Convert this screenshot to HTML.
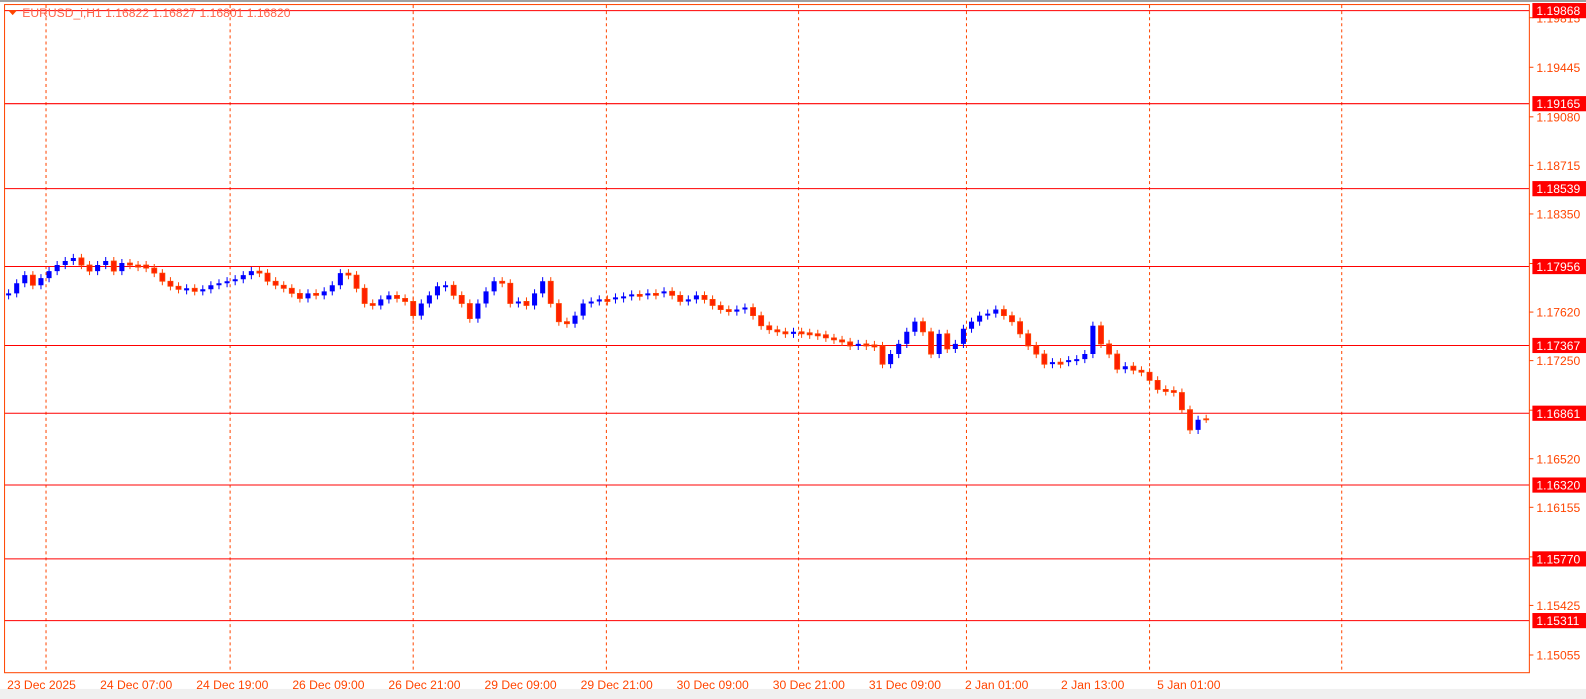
<!DOCTYPE html>
<html><head><meta charset="utf-8"><style>
body{margin:0;width:1586px;height:699px;background:#fff;overflow:hidden}
svg{display:block}
text{font-family:"Liberation Sans",sans-serif;font-size:12px}
</style></head><body>
<svg width="1586" height="699" viewBox="0 0 1568 691" preserveAspectRatio="none" xmlns="http://www.w3.org/2000/svg">
<rect x="0" y="0" width="1568" height="2" fill="#a0a0a0"/>
<rect x="0" y="681" width="1568" height="10" fill="#f0f0f0"/>
<g stroke="#ff4500" stroke-dasharray="3,3" stroke-width="1">
<line x1="45.5" y1="5" x2="45.5" y2="665"/><line x1="227.5" y1="5" x2="227.5" y2="665"/><line x1="408.5" y1="5" x2="408.5" y2="665"/><line x1="599.5" y1="5" x2="599.5" y2="665"/><line x1="789.5" y1="5" x2="789.5" y2="665"/><line x1="955.5" y1="5" x2="955.5" y2="665"/><line x1="1136.5" y1="5" x2="1136.5" y2="665"/><line x1="1326.5" y1="5" x2="1326.5" y2="665"/>
</g>
<g stroke="#ff0000" stroke-width="1">
<line x1="4" y1="10.5" x2="1512" y2="10.5"/><line x1="4" y1="102.5" x2="1512" y2="102.5"/><line x1="4" y1="186.5" x2="1512" y2="186.5"/><line x1="4" y1="263.5" x2="1512" y2="263.5"/><line x1="4" y1="341.5" x2="1512" y2="341.5"/><line x1="4" y1="408.5" x2="1512" y2="408.5"/><line x1="4" y1="479.5" x2="1512" y2="479.5"/><line x1="4" y1="552.5" x2="1512" y2="552.5"/><line x1="4" y1="613.5" x2="1512" y2="613.5"/>
</g>
<rect x="4.5" y="4.5" width="1507.5" height="660.5" fill="none" stroke="#ff4500"/>
<path fill="none" stroke="#0000ff" d="M8.5 286v10 M16.5 276v18 M24.5 268v16 M40.5 271v15 M48.5 264v15 M56.5 258v14 M64.5 254v12 M72.5 251v11 M96.5 258v14 M104.5 254v12 M120.5 256v16 M184.5 281v10 M200.5 282v10 M208.5 278v12 M216.5 276v10 M224.5 274v10 M232.5 272v10 M240.5 268v12 M248.5 264v12 M304.5 286v13 M320.5 284v12 M328.5 278v14 M336.5 266v20 M376.5 292v14 M384.5 288v12 M416.5 296v20 M424.5 288v16 M432.5 279v17 M440.5 278v10 M472.5 296v23 M480.5 284v20 M488.5 274v18 M512.5 294v10 M528.5 286v20 M536.5 274v20 M568.5 308v16 M576.5 296v20 M584.5 294v10 M592.5 292v10 M608.5 290v10 M616.5 289v10 M624.5 287v10 M640.5 286v10 M656.5 284v10 M680.5 292v10 M688.5 288v12 M728.5 302v10 M736.5 300v10 M784.5 324v10 M848.5 336v10 M880.5 346v18 M888.5 336v18 M896.5 324v20 M904.5 314v18 M928.5 326v28 M944.5 336v13 M952.5 321v23 M960.5 314v15 M968.5 308v14 M976.5 306v10 M984.5 302v12 M1040.5 354v10 M1056.5 352v10 M1064.5 351v10 M1072.5 346v13 M1080.5 318v36 M1112.5 358v11 M1184.5 411v18"/>
<path fill="#0000ff" d="M6 290h5v2h-5z M14 280h5v10h-5z M22 272h5v8h-5z M38 275h5v7h-5z M46 268h5v7h-5z M54 262h5v6h-5z M62 258h5v4h-5z M70 255h5v3h-5z M94 262h5v6h-5z M102 258h5v4h-5z M118 260h5v8h-5z M182 285h5v2h-5z M198 286h5v2h-5z M206 282h5v4h-5z M214 280h5v2h-5z M222 278h5v2h-5z M230 276h5v2h-5z M238 272h5v4h-5z M246 268h5v4h-5z M302 290h5v5h-5z M318 288h5v4h-5z M326 282h5v6h-5z M334 270h5v12h-5z M374 296h5v6h-5z M382 292h5v4h-5z M414 300h5v12h-5z M422 292h5v8h-5z M430 283h5v9h-5z M438 282h5v2h-5z M470 300h5v15h-5z M478 288h5v12h-5z M486 278h5v10h-5z M510 298h5v2h-5z M526 290h5v12h-5z M534 278h5v12h-5z M566 312h5v8h-5z M574 300h5v12h-5z M582 298h5v2h-5z M590 296h5v2h-5z M606 294h5v2h-5z M614 293h5v2h-5z M622 291h5v2h-5z M638 290h5v2h-5z M654 288h5v2h-5z M678 296h5v2h-5z M686 292h5v4h-5z M726 306h5v2h-5z M734 304h5v2h-5z M782 328h5v2h-5z M846 340h5v2h-5z M878 350h5v10h-5z M886 340h5v10h-5z M894 328h5v12h-5z M902 318h5v10h-5z M926 330h5v20h-5z M942 340h5v5h-5z M950 325h5v15h-5z M958 318h5v7h-5z M966 312h5v6h-5z M974 310h5v2h-5z M982 306h5v4h-5z M1038 358h5v2h-5z M1054 356h5v2h-5z M1062 355h5v2h-5z M1070 350h5v5h-5z M1078 322h5v28h-5z M1110 362h5v3h-5z M1182 415h5v10h-5z"/>
<path fill="none" stroke="#ff4500" d="M32.5 268v18 M80.5 251v15 M88.5 258v14 M112.5 254v18 M128.5 256v10 M136.5 258v10 M144.5 258v11 M152.5 261v13 M160.5 266v16 M168.5 274v13 M176.5 279v11 M192.5 281v11 M256.5 264v10 M264.5 266v16 M272.5 274v12 M280.5 278v11 M288.5 281v13 M296.5 286v13 M312.5 286v10 M344.5 266v10 M352.5 268v21 M360.5 281v23 M368.5 296v10 M392.5 288v11 M400.5 291v11 M408.5 294v22 M448.5 278v18 M456.5 288v16 M464.5 296v23 M496.5 274v10 M504.5 276v28 M520.5 294v12 M544.5 274v30 M552.5 296v26 M560.5 314v10 M600.5 292v10 M632.5 287v10 M648.5 286v10 M664.5 284v12 M672.5 288v14 M696.5 288v12 M704.5 292v14 M712.5 298v12 M720.5 302v10 M744.5 300v16 M752.5 308v18 M760.5 318v12 M768.5 322v10 M776.5 324v10 M792.5 324v10 M800.5 325v10 M808.5 326v10 M816.5 327v11 M824.5 330v10 M832.5 332v10 M840.5 334v12 M856.5 336v10 M864.5 337v10 M872.5 338v26 M912.5 314v18 M920.5 324v30 M936.5 326v23 M992.5 302v14 M1000.5 308v14 M1008.5 314v20 M1016.5 326v20 M1024.5 338v16 M1032.5 346v18 M1048.5 354v10 M1088.5 318v26 M1096.5 336v18 M1104.5 346v23 M1120.5 358v12 M1128.5 362v10 M1136.5 364v16 M1144.5 372v17 M1152.5 381v10 M1160.5 382v10 M1168.5 384v25 M1176.5 401v28 M1192.5 410v8"/>
<path fill="#ff2000" stroke="#ff4500" stroke-width="0.8" d="M30 272h5v10h-5z M78 255h5v7h-5z M86 262h5v6h-5z M110 258h5v10h-5z M126 260h5v2h-5z M134 262h5v2h-5z M142 262h5v3h-5z M150 265h5v5h-5z M158 270h5v8h-5z M166 278h5v5h-5z M174 283h5v3h-5z M190 285h5v3h-5z M254 268h5v2h-5z M262 270h5v8h-5z M270 278h5v4h-5z M278 282h5v3h-5z M286 285h5v5h-5z M294 290h5v5h-5z M310 290h5v2h-5z M342 270h5v2h-5z M350 272h5v13h-5z M358 285h5v15h-5z M366 300h5v2h-5z M390 292h5v3h-5z M398 295h5v3h-5z M406 298h5v14h-5z M446 282h5v10h-5z M454 292h5v8h-5z M462 300h5v15h-5z M494 278h5v2h-5z M502 280h5v20h-5z M518 298h5v4h-5z M542 278h5v22h-5z M550 300h5v18h-5z M558 318h5v2h-5z M598 296h5v2h-5z M630 291h5v2h-5z M646 290h5v2h-5z M662 288h5v4h-5z M670 292h5v6h-5z M694 292h5v4h-5z M702 296h5v6h-5z M710 302h5v4h-5z M718 306h5v2h-5z M742 304h5v8h-5z M750 312h5v10h-5z M758 322h5v4h-5z M766 326h5v2h-5z M774 328h5v2h-5z M790 328h5v2h-5z M798 329h5v2h-5z M806 330h5v2h-5z M814 331h5v3h-5z M822 334h5v2h-5z M830 336h5v2h-5z M838 338h5v4h-5z M854 340h5v2h-5z M862 341h5v2h-5z M870 342h5v18h-5z M910 318h5v10h-5z M918 328h5v22h-5z M934 330h5v15h-5z M990 306h5v6h-5z M998 312h5v6h-5z M1006 318h5v12h-5z M1014 330h5v12h-5z M1022 342h5v8h-5z M1030 350h5v10h-5z M1046 358h5v2h-5z M1086 322h5v18h-5z M1094 340h5v10h-5z M1102 350h5v15h-5z M1118 362h5v4h-5z M1126 366h5v2h-5z M1134 368h5v8h-5z M1142 376h5v9h-5z M1150 385h5v2h-5z M1158 386h5v2h-5z M1166 388h5v17h-5z M1174 405h5v20h-5z M1190 414h5v1h-5z"/>
<path d="M8 10 L17 10 L12.5 15 Z" fill="#ff4500"/>
<text x="22" y="17" fill="#ff6347">EURUSD_i,H1  1.16822 1.16827 1.16801 1.16820</text>
<g fill="#ff4500">
<rect x="1512" y="17" width="4" height="1"/><rect x="1512" y="66" width="4" height="1"/><rect x="1512" y="115" width="4" height="1"/><rect x="1512" y="163" width="4" height="1"/><rect x="1512" y="211" width="4" height="1"/><rect x="1512" y="260" width="4" height="1"/><rect x="1512" y="308" width="4" height="1"/><rect x="1512" y="356" width="4" height="1"/><rect x="1512" y="405" width="4" height="1"/><rect x="1512" y="453" width="4" height="1"/><rect x="1512" y="501" width="4" height="1"/><rect x="1512" y="550" width="4" height="1"/><rect x="1512" y="598" width="4" height="1"/><rect x="1512" y="647" width="4" height="1"/>
<text x="1519" y="22">1.19815</text><text x="1519" y="71">1.19445</text><text x="1519" y="120">1.19080</text><text x="1519" y="168">1.18715</text><text x="1519" y="216">1.18350</text><text x="1519" y="265">1.17985</text><text x="1519" y="313">1.17620</text><text x="1519" y="361">1.17250</text><text x="1519" y="410">1.16885</text><text x="1519" y="458">1.16520</text><text x="1519" y="506">1.16155</text><text x="1519" y="555">1.15790</text><text x="1519" y="603">1.15425</text><text x="1519" y="652">1.15055</text>
</g>
<g fill="#ff0000">
<rect x="1515" y="3" width="53" height="15"/><rect x="1515" y="95" width="53" height="15"/><rect x="1515" y="179" width="53" height="15"/><rect x="1515" y="256" width="53" height="15"/><rect x="1515" y="334" width="53" height="15"/><rect x="1515" y="401" width="53" height="15"/><rect x="1515" y="472" width="53" height="15"/><rect x="1515" y="545" width="53" height="15"/><rect x="1515" y="606" width="53" height="15"/>
</g>
<g fill="#fff">
<text x="1519" y="15">1.19868</text><text x="1519" y="107">1.19165</text><text x="1519" y="191">1.18539</text><text x="1519" y="268">1.17956</text><text x="1519" y="346">1.17367</text><text x="1519" y="413">1.16861</text><text x="1519" y="484">1.16320</text><text x="1519" y="557">1.15770</text><text x="1519" y="618">1.15311</text>
</g>
<g fill="#ff4500">
<text x="7" y="681">23 Dec 2025</text><text x="99" y="681">24 Dec 07:00</text><text x="194" y="681">24 Dec 19:00</text><text x="289" y="681">26 Dec 09:00</text><text x="384" y="681">26 Dec 21:00</text><text x="479" y="681">29 Dec 09:00</text><text x="574" y="681">29 Dec 21:00</text><text x="669" y="681">30 Dec 09:00</text><text x="764" y="681">30 Dec 21:00</text><text x="859" y="681">31 Dec 09:00</text><text x="954" y="681">2 Jan 01:00</text><text x="1049" y="681">2 Jan 13:00</text><text x="1144" y="681">5 Jan 01:00</text>
</g>
</svg>
</body></html>
